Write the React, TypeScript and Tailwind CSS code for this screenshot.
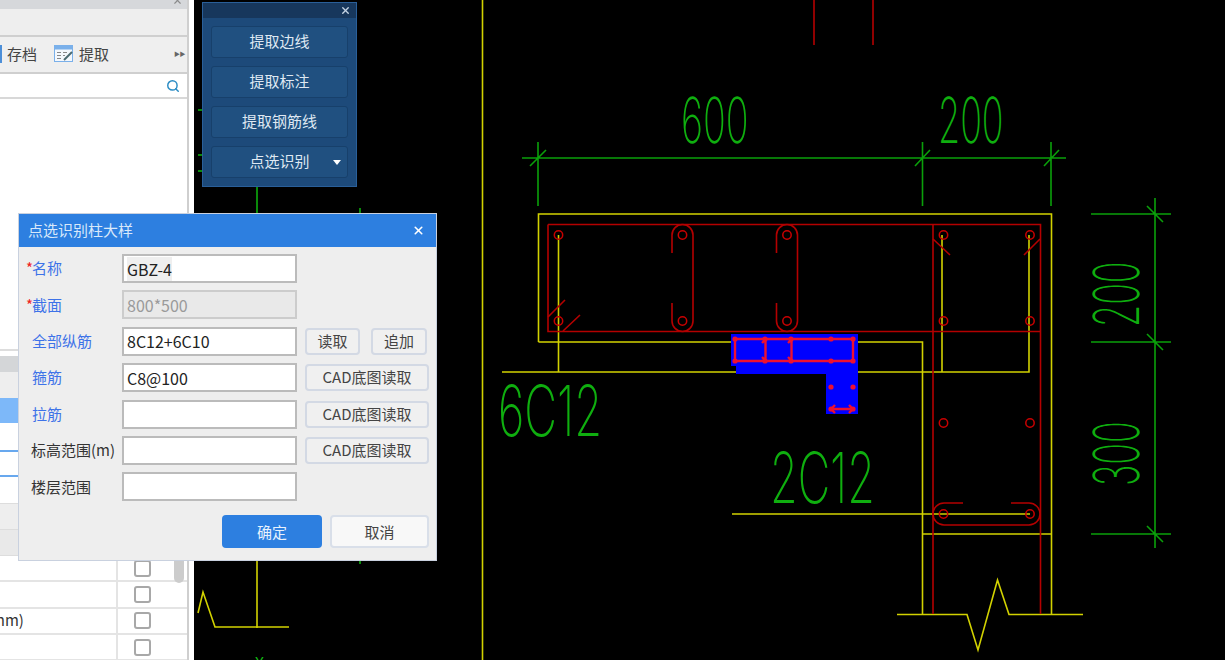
import React from "react";
import { Search, X } from "lucide-react";

const CJK = '"Noto Sans CJK SC","Liberation Sans",sans-serif';
const G = "#0aa00a";
const Y = "#d2d200";
const R = "#b40000";
const B = "#ee1030";

function L({ d, c, w = 1.6 }: { d: string; c: string; w?: number }) {
  return <path d={d} fill="none" stroke={c} strokeWidth={w} />;
}

function CadText({ t, x, y, sx = 0.57, size = 63, rot = false }: { t: string; x: number; y: number; sx?: number; size?: number; rot?: boolean }) {
  const transform = rot ? `translate(${x} ${y}) rotate(-90) scale(${sx} 1)` : `translate(${x} ${y}) scale(${sx} 1)`;
  return (
    <text transform={transform} fill="#0fae0f" fontSize={size} fontWeight={150} fontFamily="Inter, Roboto, sans-serif">
      {t}
    </text>
  );
}

function Cad() {
  const circles: [number, number][] = [
    [558.5, 235], [682.5, 235], [787, 235], [943.5, 235], [1030, 235],
    [558.5, 321], [682.5, 321], [787, 321], [943.5, 321], [1030, 321],
    [943.5, 423], [1030, 423], [943.5, 514], [1030, 514],
  ];
  const dots: [number, number][] = [
    [735, 339], [765, 339], [791, 339], [831, 339], [853, 339],
    [735, 361], [765, 361], [791, 361], [831, 361], [853, 361],
    [831, 387], [853, 387], [831, 409], [853, 409],
  ];
  return (
    <svg viewBox="194 0 1031 660" className="block h-[660px] w-[1031px] bg-black">
      {/* left fragments */}
      <L c="#0a8a0a" w={2} d="M257 186V213M198 110H203M198 155H203M198 171H203M360 208V214M360 560V564" />
      <L c={Y} d="M257 560V628M198 613L203 592L215 627H289" />
      <text x="255" y="667" fill="#12c012" fontSize="13" fontFamily="Inter, sans-serif">Y</text>
      <L c={Y} d="M482.5 0V660" />
      <L c={R} d="M814 0V45M873 0V45" />

      {/* dimensions */}
      <L c={G} d="M522 158H1066M538 142V206M922.5 142V206M1051 142V206M530 166L546 150M915 166L930 150M1044 166L1059 150" />
      <L c={G} d="M1155 198V548M1091 214H1171M1091 342H1171M1091 534H1171M1147 206L1163 222M1147 334L1163 350M1147 526L1163 542" />
      <CadText t="600" x={681} y={143} sx={0.6} />
      <CadText t="200" x={938} y={143} sx={0.57} />
      <CadText t="6C12" x={498} y={436} sx={0.645} size={70} />
      <CadText t="2C12" x={770} y={503} sx={0.64} size={70} />
      <CadText t="200" x={1139} y={327} rot />
      <CadText t="300" x={1139} y={486} rot />

      {/* yellow outline */}
      <L c={Y} d="M538.5 342V214H1051.5V614M538.5 342H922.5V614M502 372H1029V235M942 235V372M558.5 235V372M732 514H1030M922 534H1051" />
      <L c={Y} d="M897 614.5H967L978 650L997.5 580L1009 614.5H1083" />

      {/* red rebar */}
      <L c={R} d="M548 224.5H1040.5V614M548 224.5V331.5H1040.5M933 224.5V614" />
      <L c={R} d="M672 253V235A10.5 10.5 0 0 1 693 235V321A10.5 10.5 0 0 1 672 321V303" />
      <L c={R} d="M776.5 253V235A10.5 10.5 0 0 1 797.5 235V321A10.5 10.5 0 0 1 776.5 321V303" />
      <L c={R} d="M548 317L565 300M563 331L580 315M933 239L950 255M1040 239L1024 255" />
      <L c={R} d="M963 503H944A11 11 0 0 0 944 525H1029A11 11 0 0 0 1029 503H1011" />
      {circles.map(([x, y], i) => (
        <circle key={i} cx={x} cy={y} r={4.2} fill="none" stroke="#c80000" strokeWidth={1.5} />
      ))}

      {/* selection highlight */}
      <path d="M731 334H858V414H826V374H736V366H731Z" fill="#0000ff" />
      <L c={B} w={2.4} d="M735 339H853V361H735ZM765.5 339V361M791.5 339V361M831 409H853M762 343L766 339M762 357L766 361M788 343L792 339M788 357L792 361M835 405L831 409L835 413M849 405L853 409L849 413" />
      {dots.map(([x, y], i) => (
        <circle key={i} cx={x} cy={y} r={2.6} fill={B} />
      ))}
    </svg>
  );
}

function Check() {
  return <span className="block h-[17px] w-[17px] rounded-[3px] border-2 border-[#a8a8a8] bg-white" />;
}

function TableRow({ children }: { children?: React.ReactNode }) {
  return (
    <div className="flex h-[26.3px] shrink-0 border-b-2 border-[#e4e4e4]">
      <div className="flex w-[118px] items-center overflow-hidden border-r-2 border-[#e4e4e4] text-[15px] text-[#333]">{children}</div>
      <div className="flex w-[49px] items-center justify-center">
        <Check />
      </div>
    </div>
  );
}

function LeftPanel() {
  return (
    <div className="flex h-[660px] w-[194px] shrink-0 flex-col border-r-[5px] border-white bg-white" style={{ fontFamily: CJK }}>
      <div className="flex h-[660px] w-[189px] flex-col border-r-2 border-[#cfcfcf]">
        <div className="relative h-[9px] shrink-0 overflow-hidden bg-[#d6d8db]">
          <X className="absolute right-[4px] top-[-5px] h-[11px] w-[11px] text-[#8a8a8a]" strokeWidth={2.5} />
        </div>
        <div className="h-[28px] shrink-0 border-b-2 border-[#cfcfcf] bg-[#eeeeee]" />
        <div className="flex h-[37px] shrink-0 items-center border-b-2 border-[#cfcfcf] bg-[#efefef] pb-[2px] text-[15px] leading-none text-[#444]">
          <span className="h-[18px] w-[2px] bg-[#4d8fd8]" />
          <span className="ml-[5px]">存档</span>
          <svg viewBox="0 0 20 18" className="ml-[17px] h-[18px] w-[20px]">
            <rect x="0.5" y="0.5" width="18" height="16" fill="#f4f8fd" stroke="#7ab0ea" />
            <rect x="0.5" y="0.5" width="18" height="4" fill="#7ab0ea" />
            <path d="M3 7.5H7M9 7.5H13M3 10.5H7M9 10.5H11M3 13.5H7" stroke="#888" strokeWidth="1" />
            <path d="M10 15L18 7" stroke="#4a6a70" strokeWidth="2" />
          </svg>
          <span className="ml-[5px]">提取</span>
          <span className="ml-auto mr-[2px] text-[6px] tracking-[-0.5px] text-[#666]">▶▶</span>
        </div>
        <div className="flex h-[25px] shrink-0 items-center justify-end border-b-2 border-[#d8d8d8] bg-white pr-[7px]">
          <Search className="h-[14px] w-[14px] text-[#2b8cc4]" strokeWidth={2.5} />
        </div>
        <div className="h-[252px] shrink-0 border-b-2 border-[#dddddd] bg-white" />
        <div className="h-[5px] shrink-0 bg-white" />
        <div className="h-[16px] shrink-0 bg-[#d4d6d8]" />
        <div className="h-[26px] shrink-0 bg-[#eeeeee]" />
        <div className="h-[26px] shrink-0 border-b border-white bg-[#7db8f9]" />
        <div className="h-[28px] shrink-0 border-b-2 border-[#68a8ee] bg-white" />
        <div className="h-[25px] shrink-0 border-b-2 border-[#68a8ee] bg-white" />
        <div className="h-[27px] shrink-0 border-b border-[#dddddd] bg-white" />
        <div className="h-[26px] shrink-0 border-b border-[#dddddd] bg-[#eeeeee]" />
        <div className="h-[26px] shrink-0 border-b border-[#dddddd] bg-[#e9e9e9]" />
        <div className="relative min-h-0 flex-1 overflow-hidden">
          <TableRow />
          <TableRow />
          <TableRow>
            <span className="ml-[-9px]">mm)</span>
          </TableRow>
          <TableRow />
          <span className="absolute left-[174px] top-[-30px] h-[57px] w-[10px] rounded-[5px] bg-[#cccccc]" />
        </div>
      </div>
    </div>
  );
}

function ToolButton({ label, caret = false }: { label: string; caret?: boolean }) {
  return (
    <div className="relative flex h-[32px] items-center justify-center rounded-[3px] border border-[#17406b] bg-[#205080] pb-[1px] text-[15px] text-[#dfe8f2]">
      {label}
      {caret && <span className="absolute right-[6px] top-[13px] h-0 w-0 border-x-[4px] border-t-[5px] border-x-transparent border-t-white" />}
    </div>
  );
}

function ToolPanel() {
  return (
    <div className="absolute left-[202px] top-[2px] flex h-[185px] w-[155px] flex-col border border-[#2a5f99] bg-[#1d4a7a]" style={{ fontFamily: CJK }}>
      <div className="flex h-[15px] shrink-0 items-center justify-end bg-[#17375c] pr-[5px]">
        <X className="h-[11px] w-[11px] text-[#c4d4e4]" strokeWidth={3} />
      </div>
      <div className="flex flex-col gap-[8px] px-[8px] pt-[8px]">
        <ToolButton label="提取边线" />
        <ToolButton label="提取标注" />
        <ToolButton label="提取钢筋线" />
        <ToolButton label="点选识别" caret />
      </div>
    </div>
  );
}

function Field({ label, star, blue = true, value, disabled, children, hl }: { label: string; star?: boolean; blue?: boolean; value?: string; disabled?: boolean; children?: React.ReactNode; hl?: boolean }) {
  return (
    <div className="flex h-[29px] items-center">
      <div className={`flex w-[96px] shrink-0 items-center whitespace-nowrap text-[15px] ${blue ? "text-[#3d72e8]" : "pl-[5px] text-[#333]"}`}>
        {blue && <span className="w-[6px] shrink-0 text-[#f02020]">{star ? "*" : ""}</span>}
        <span>{label}</span>
      </div>
      <div className={`flex h-[29px] w-[175px] shrink-0 items-center border-2 px-[3px] text-[16px] ${disabled ? "border-[#cccccc] bg-[#e9e9e9] text-[#9a9a9a]" : "border-[#bbbbbb] bg-white text-[#222]"}`}>
        <span className={hl ? "bg-[#efefef]" : ""}>{value}</span>
      </div>
      {children && <div className="ml-[8px] flex gap-[11px]">{children}</div>}
    </div>
  );
}

function GrayBtn({ w, label }: { w: string; label: string }) {
  return (
    <div className={`flex h-[27px] items-center justify-center rounded-[4px] border-2 border-[#d3d9e4] bg-[#f0f0f0] text-[15px] text-[#444] ${w}`}>
      {label}
    </div>
  );
}

function Dialog() {
  return (
    <div className="absolute left-[18px] top-[213px] flex h-[348px] w-[419px] flex-col border border-[#c9d1df] bg-[#eeeeee]" style={{ fontFamily: CJK }}>
      <div className="flex h-[33px] shrink-0 items-center justify-between bg-[#2d7fe0] pl-[9px] pr-[11px] text-[15px] text-[#d8e8fa]">
        <span>点选识别柱大样</span>
        <X className="h-[13px] w-[13px] text-white" strokeWidth={3} />
      </div>
      <div className="flex flex-col gap-[7.4px] pl-[7px] pt-[7px]">
        <Field label="名称" star value="GBZ-4" hl />
        <Field label="截面" star value="800*500" disabled />
        <Field label="全部纵筋" value="8C12+6C10">
          <GrayBtn w="w-[55px]" label="读取" />
          <GrayBtn w="w-[56px]" label="追加" />
        </Field>
        <Field label="箍筋" value="C8@100">
          <GrayBtn w="w-[124px]" label="CAD底图读取" />
        </Field>
        <Field label="拉筋">
          <GrayBtn w="w-[124px]" label="CAD底图读取" />
        </Field>
        <Field label="标高范围(m)" blue={false}>
          <GrayBtn w="w-[124px]" label="CAD底图读取" />
        </Field>
        <Field label="楼层范围" blue={false} />
      </div>
      <div className="mt-[14px] flex justify-end gap-[8px] pr-[7px]">
        <div className="flex h-[33px] w-[100px] items-center justify-center rounded-[4px] bg-[#2d7fe0] text-[15px] text-[#e8f2fd]">确定</div>
        <div className="flex h-[33px] w-[99px] items-center justify-center rounded-[4px] border-2 border-[#d9dfe9] bg-[#f8f8f8] text-[15px] text-[#444]">取消</div>
      </div>
    </div>
  );
}

export default function App() {
  return (
    <div className="relative flex h-[660px] w-[1225px] overflow-hidden bg-black">
      <LeftPanel />
      <Cad />
      <ToolPanel />
      <Dialog />
    </div>
  );
}
